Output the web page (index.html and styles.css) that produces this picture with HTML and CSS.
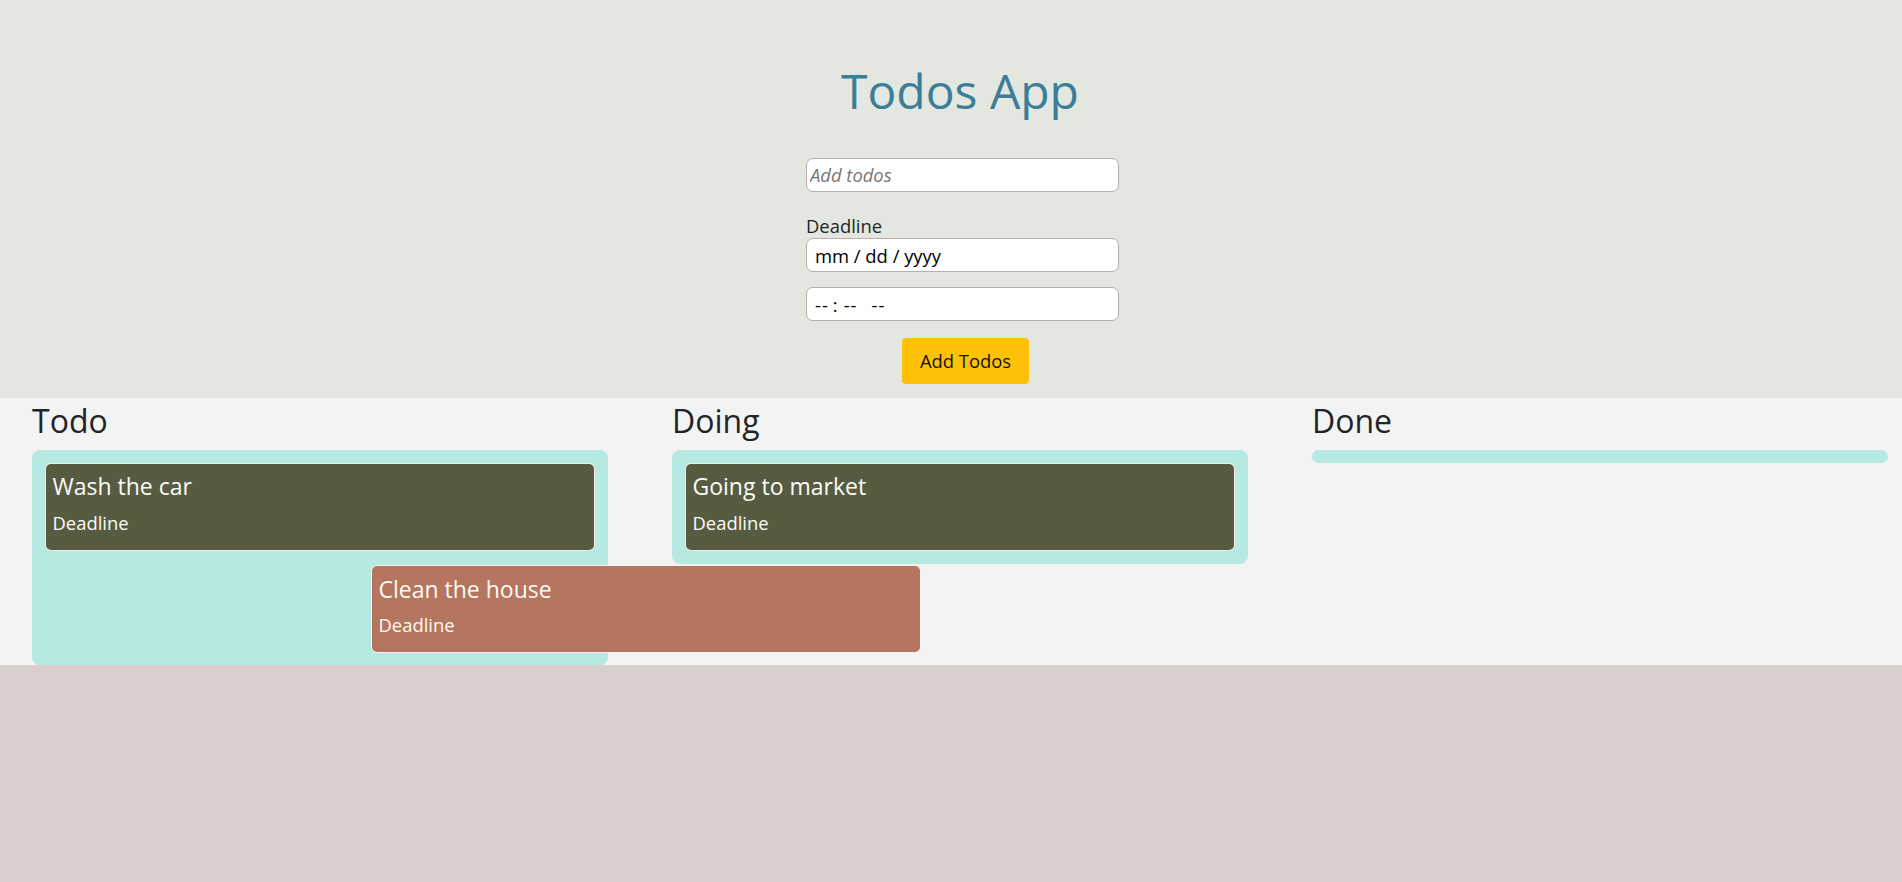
FILE: index.html
```html
<!DOCTYPE html>
<html lang="en">
<head>
<meta charset="utf-8">
<title>Todos App</title>
<link rel="stylesheet" href="styles.css">
</head>
<body>
<div class="app">
  <header class="top">
    <h1 class="title">Todos App</h1>
    <form class="add-form">
      <input class="field field-text" type="text" placeholder="Add todos">
      <label class="label">Deadline</label>
      <div class="field field-date">mm / dd / yyyy</div>
      <div class="field field-time"><span>--</span><span class="colon">:</span><span>--</span><span class="ampm">--</span></div>
      <button class="btn" type="button">Add Todos</button>
    </form>
  </header>

  <main class="board">
    <section class="col">
      <h2 class="col-title">Todo</h2>
      <div class="list">
        <div class="card card-olive">
          <h4 class="card-title">Wash the car</h4>
          <h5 class="card-deadline">Deadline</h5>
        </div>
        <div class="card card-slot"></div>
      </div>
    </section>
    <section class="col">
      <h2 class="col-title">Doing</h2>
      <div class="list">
        <div class="card card-olive">
          <h4 class="card-title">Going to market</h4>
          <h5 class="card-deadline">Deadline</h5>
        </div>
      </div>
    </section>
    <section class="col">
      <h2 class="col-title">Done</h2>
      <div class="list"></div>
    </section>
  </main>

  <div class="card card-drag">
    <h4 class="card-title">Clean the house</h4>
    <h5 class="card-deadline">Deadline</h5>
  </div>
</div>
</body>
</html>
```
FILE: styles.css
```css
html, body {
  margin: 0;
  padding: 0;
  overflow: hidden;
  background: #d9cdcd;
}

body {
  font-family: "Open Sans", "Noto Sans", sans-serif;
  color: #212529;
}

.app {
  position: relative;
  width: 1920px;
  min-height: 882px;
}

/* ---------- header ---------- */
.top {
  background: #e4e7df;
  padding: 62px 0 14px;
}

.title {
  margin: 0 0 38px;
  text-align: center;
  font-size: 48px;
  font-weight: 400;
  line-height: 1.2;
  color: #3a7e9a;
}

.add-form {
  width: 313px;
  margin-left: 806px;
  display: flex;
  flex-direction: column;
}

.field {
  box-sizing: border-box;
  height: 34px;
  width: 313px;
  border: 1px solid #b8adad;
  border-radius: 7px;
  background: #ffffff;
  font-family: inherit;
  font-size: 18.4px;
  color: #000;
}

.field-text {
  padding: 0 3px;
  margin: 0 0 22px;
  outline: none;
}

.field-text::placeholder {
  color: #7a7676;
  font-style: italic;
}

.label {
  display: block;
  font-size: 18.4px;
  line-height: 24px;
  color: #212529;
}

.field-date,
.field-time {
  display: flex;
  align-items: center;
  padding: 1px 8px 0;
  white-space: pre;
}

.field-time {
  margin-top: 15px;
}

.field-time span {
  letter-spacing: 1px;
}

.field-time .colon {
  margin: 0 5px 0 4px;
}

.field-time .ampm {
  margin-left: 14px;
}

.btn {
  align-self: flex-start;
  margin: 17px 0 0 96px;
  height: 46px;
  width: 127px;
  padding: 0;
  border: none;
  border-radius: 4px;
  background: #ffc107;
  color: #111;
  font-family: inherit;
  font-size: 18.4px;
}

/* ---------- board ---------- */
.board {
  background: #f3f3f3;
  display: grid;
  grid-template-columns: repeat(3, 640px);
  padding-top: 4px;
}

.col {
  padding: 0 32px;
}

.col-title {
  margin: 0 0 9.6px;
  font-size: 32px;
  font-weight: 400;
  line-height: 1.2;
  color: #212529;
}

.list {
  display: flex;
  flex-direction: column;
  background: #b5e9e1;
  border-radius: 8px;
  padding: 6.5px;
}

.card {
  box-sizing: border-box;
  height: 88px;
  margin: 6.5px;
  padding: 9.5px 6.5px 0;
  border: 1px solid rgba(255, 255, 255, 0.9);
  border-radius: 6px;
  color: #fbfbf6;
}

.card-olive {
  background: #565b42;
}

.card-slot {
  visibility: hidden;
}

.card-title {
  margin: 0 0 11px;
  font-size: 23px;
  font-weight: 400;
  line-height: 1.2;
}

.card-deadline {
  margin: 0;
  font-size: 18.4px;
  font-weight: 400;
  line-height: 1.2;
}

.card-drag {
  position: absolute;
  left: 371px;
  top: 565px;
  width: 550px;
  margin: 0;
  background: #b5755e;
}
```
